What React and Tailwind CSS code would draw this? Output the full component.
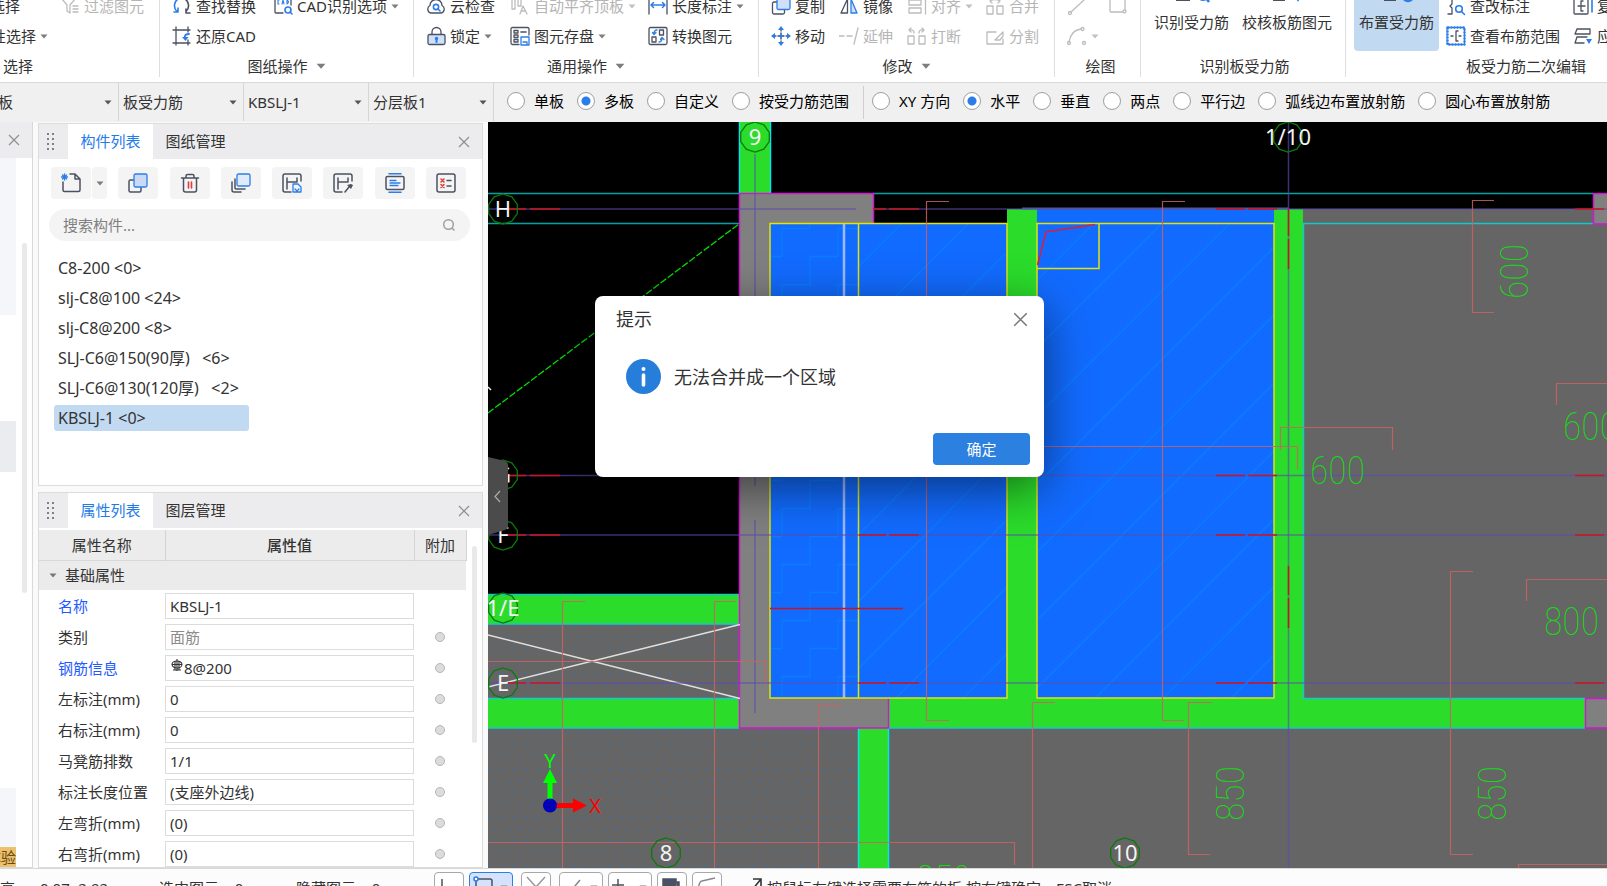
import React from "react";

/* ---------- icons ---------- */

const INK = "#4b5160";
const BLUE = "#2b7de9";
const MUTE = "#bcbcbc";

function Svg({ size = 20, children, className = "" }) {
  return (
    <svg
      width={size}
      height={size}
      viewBox="0 0 20 20"
      fill="none"
      strokeWidth="1.3"
      strokeLinecap="round"
      strokeLinejoin="round"
      aria-hidden="true"
      className={"shrink-0 " + className}
    >
      {children}
    </svg>
  );
}

const icons = {
  filter: (
    <Svg>
      <path d="M2 3h13L10 9v8l-3-2V9z" stroke={MUTE} />
      <path d="M13 10h5M13 13h5M13 16h5" stroke={MUTE} />
    </Svg>
  ),
  replace: (
    <Svg>
      <path d="M6 3A8 8 0 0 0 5 15.500M2 16h4v-4" stroke={BLUE} strokeWidth="1.6" />
      <path d="M13 3a8 8 0 0 1 1 12.500M18 17h-4v-4" stroke={INK} strokeWidth="1.6" />
    </Svg>
  ),
  cadOptions: (
    <Svg>
      <path d="M2 3v13q0 1 1 1h7M18 3v6" stroke={INK} />
      <path d="M6 4H5v4h1M9 8l1-4 1 4M14 4v4q3-2 0-4" stroke={BLUE} strokeWidth="1.1" />
      <circle cx="15" cy="14" r="3" stroke={BLUE} strokeWidth="1.6" />
      <path d="M17 16l2 2" stroke={BLUE} strokeWidth="1.6" />
    </Svg>
  ),
  restoreCad: (
    <Svg>
      <path d="M1 4h17M1 17h17M4 1v18M16 1v5M16 14v5" stroke={INK} />
      <path d="M17 8q-5 0-4 4" stroke={BLUE} strokeWidth="1.8" />
      <path d="M10 11l3.500 4 3-4z" fill={BLUE} />
    </Svg>
  ),
  cloud: (
    <Svg>
      <path d="M5 17a4 4 0 0 1-1-7.500A6 6 0 0 1 16 9.500 4 4 0 0 1 15 17z" stroke={INK} />
      <circle cx="10" cy="11" r="2.600" stroke={BLUE} strokeWidth="1.6" />
      <path d="M12 13l2 2" stroke={BLUE} strokeWidth="1.6" />
    </Svg>
  ),
  alignTop: (
    <Svg>
      <path d="M2 3v10h3V3M8 3v7h3V3M10 18l3-8 4 8M11.500 15h4" stroke={MUTE} />
    </Svg>
  ),
  dimension: (
    <Svg>
      <path d="M1 2v16M19 2v16" stroke={INK} />
      <path d="M3 9h14M5.500 6.500L3 9l2.500 2.500M14.500 6.500L17 9l-2.500 2.500" stroke={BLUE} strokeWidth="1.5" />
    </Svg>
  ),
  lock: (
    <Svg>
      <path d="M6 9V6a4.500 4.500 0 0 1 9 0v3" stroke={INK} />
      <rect x="2" y="8.500" width="17" height="10" rx="1.500" fill="#cfe0f8" stroke={INK} />
      <path d="M10.500 12v4" stroke={BLUE} strokeWidth="2" />
      <circle cx="10.500" cy="12.500" r="1.700" fill={BLUE} />
    </Svg>
  ),
  store: (
    <Svg>
      <path d="M19 9V3q0-1.500-1.500-1.500h-15Q1 1.500 1 3v14q0 1.500 1.500 1.500H9" stroke={INK} />
      <rect x="4" y="4.500" width="4" height="2.500" stroke={INK} />
      <rect x="4" y="9" width="4" height="2.500" stroke={INK} />
      <rect x="4" y="13.500" width="4" height="2.500" stroke={INK} />
      <path d="M11 6h5" stroke={INK} strokeWidth="1.6" />
      <path d="M11 11h8v8h-8zM13 16h4v3" stroke={BLUE} />
    </Svg>
  ),
  convert: (
    <Svg>
      <rect x="1" y="1.500" width="18" height="17" rx="1.500" stroke={INK} />
      <rect x="11.500" y="4" width="4" height="5" stroke={INK} />
      <rect x="4" y="11" width="4" height="5" stroke={INK} />
      <path d="M9 4q-3 0-3 4M4.500 6.500L6 8.500l2-2M11 16q3 0 3-4M12.500 13.500L14 11.500l2 2" stroke={BLUE} />
    </Svg>
  ),
  copy: (
    <Svg>
      <rect x="1.500" y="6" width="12" height="12" rx="1.500" stroke={INK} />
      <rect x="6" y="0.500" width="13" height="13" rx="1.500" fill="#cfe0f8" stroke={BLUE} />
    </Svg>
  ),
  mirror: (
    <Svg>
      <path d="M8.500 3v14H2z" stroke={INK} />
      <path d="M12 3v14h6z" fill="#cfe0f8" stroke={BLUE} />
    </Svg>
  ),
  align: (
    <Svg>
      <path d="M18.500 2v16M2 4h12v5H2zM2 12h12v5H2z" stroke={MUTE} />
    </Svg>
  ),
  merge: (
    <Svg>
      <path d="M2 10h6v8H2zM12 10h6v8h-6zM5 5q5-3 10 0M13 3l2 2-2 2M7 3L5 5l2 2" stroke={MUTE} />
    </Svg>
  ),
  move: (
    <Svg>
      <path d="M10 3v14M3 10h14" stroke={INK} strokeDasharray="2 2" />
      <path d="M10 0l3 4H7zM10 20l3-4H7zM0 10l4-3v6zM20 10l-4-3v6z" fill={BLUE} />
      <path d="M7.500 10h5M10 7.500v5" stroke={BLUE} />
    </Svg>
  ),
  extend: (
    <Svg>
      <path d="M0 10h5M8 10h5M19 2l-4 16" stroke={MUTE} />
    </Svg>
  ),
  breakApart: (
    <Svg>
      <path d="M1 10h6v8H1zM12 10h6v8h-6zM7 7q0-4-5-3M4 2L2 4l2 2M12 7q0-4 5-3M15 2l2 2-2 2" stroke={MUTE} />
    </Svg>
  ),
  split: (
    <Svg>
      <path d="M11 6H2v12h16v-5M10 14l8-8v4l-3 4z" stroke={MUTE} />
    </Svg>
  ),
  line: (
    <Svg>
      <path d="M4 16L17 4" stroke={MUTE} />
      <circle cx="3" cy="17" r="1.500" stroke={MUTE} />
    </Svg>
  ),
  rect: (
    <Svg>
      <rect x="2" y="3" width="15" height="13" rx="1" stroke={MUTE} />
      <circle cx="16.500" cy="15.500" r="1.500" fill="#fff" stroke={MUTE} />
    </Svg>
  ),
  arc: (
    <Svg>
      <path d="M2 16Q4 4 14 3" stroke={MUTE} />
      <circle cx="2" cy="17" r="1.500" stroke={MUTE} />
      <circle cx="15.500" cy="3" r="1.500" stroke={MUTE} />
      <circle cx="17" cy="17" r="1.500" stroke={MUTE} />
    </Svg>
  ),
  editMark: (
    <Svg>
      <path d="M2 2h4v6l-2 2 2 2v6H2" stroke={INK} />
      <circle cx="13" cy="13" r="3.300" stroke={BLUE} strokeWidth="1.600" />
      <path d="M15.500 15.500l3 3" stroke={BLUE} strokeWidth="1.600" />
    </Svg>
  ),
  viewRange: (
    <Svg>
      <rect x="1.500" y="1.500" width="17" height="17" stroke={BLUE} strokeWidth="1" />
      <rect x="1.500" y="1.500" width="17" height="17" stroke={BLUE} strokeWidth="2.400" strokeDasharray="2 1" strokeLinecap="butt" />
      <path d="M12 5h-2v10h2M5 10h2M13 10h2" stroke={INK} />
    </Svg>
  ),
  copyRebar: (
    <Svg>
      <rect x="1" y="2" width="14" height="16" rx="1" stroke={INK} />
      <path d="M10 5H8v10h2M5 10h7" stroke={INK} />
      <path d="M19 2v14" stroke={BLUE} strokeWidth="1.600" />
    </Svg>
  ),
  apply: (
    <Svg>
      <path d="M4 3h13v5H2zM4 3l-2 5M4 11h10M4 11l-2 6h9" stroke={INK} />
      <path d="M13 13h6l-3 5z" fill={BLUE} />
    </Svg>
  ),
  bigSearch: (
    <svg width="40" height="20" viewBox="0 0 40 20" fill="none" aria-hidden="true">
      <path d="M4 10h14v6H4z" fill={INK} />
      <circle cx="31" cy="10" r="5" stroke={BLUE} strokeWidth="2" />
      <path d="M34 13l3 4" stroke={BLUE} strokeWidth="2.500" />
    </svg>
  ),
  bigCheck: (
    <svg width="40" height="20" viewBox="0 0 40 20" fill="none" aria-hidden="true">
      <path d="M6 10h12v6H6z" fill={INK} />
      <path d="M26 9l5 6 5-9" stroke={BLUE} strokeWidth="2" />
    </svg>
  ),
  bigGear: (
    <svg width="40" height="20" viewBox="0 0 40 20" fill="none" aria-hidden="true">
      <path d="M7 10h12v6H7z" fill={INK} />
      <circle cx="31" cy="11" r="5" stroke={BLUE} strokeWidth="2.500" />
    </svg>
  ),
  newItem: (
    <Svg>
      <path d="M9 1h5l5 5v11q0 1.500-1.500 1.500h-14Q2 18.500 2 17V9M14 1v5h5" stroke={INK} strokeWidth="1.500" />
      <path d="M3.500 1v6M0.500 4h6M1.500 2l4 4M5.500 2l-4 4" stroke={BLUE} />
    </Svg>
  ),
  duplicate: (
    <Svg>
      <rect x="1" y="7" width="12" height="12" rx="1.500" stroke={INK} strokeWidth="1.500" />
      <rect x="6" y="1" width="13" height="13" rx="1.500" fill="#c8daf5" stroke={BLUE} />
    </Svg>
  ),
  trash: (
    <Svg>
      <path d="M1.500 5h17M6 5V3q0-1.500 1.500-1.500h5Q14 1.500 14 3v2M3.500 5v12q0 2 2 2h9q2 0 2-2V5" stroke={INK} strokeWidth="1.500" />
      <path d="M8.500 9v6M11.500 9v6" stroke="#e23b3b" strokeWidth="1.600" />
    </Svg>
  ),
  layers: (
    <Svg>
      <path d="M4 6v9q0 1 1 1h9M1 9v8q0 2 2 2h7" stroke={INK} strokeWidth="1.500" />
      <rect x="6" y="1" width="13" height="12" rx="1.500" fill="#dfeafb" stroke={BLUE} />
    </Svg>
  ),
  saveH: (
    <Svg>
      <path d="M19 8V3q0-2-2-2H3Q1 1 1 3v14q0 2 2 2h6M5 5v11M5 9h10M15 5v4" stroke={INK} strokeWidth="1.500" />
      <path d="M11 11h5l3 3v5h-8zM13 16l2 2 2-2" stroke={BLUE} />
    </Svg>
  ),
  pickH: (
    <Svg>
      <path d="M19 8V3q0-2-2-2H3Q1 1 1 3v14q0 2 2 2h6M5 5v11M5 9h10M15 5v4" stroke={INK} strokeWidth="1.500" />
      <path d="M12 19l4-5" stroke={INK} strokeWidth="1.500" />
      <path d="M14 12l4 4 2-4-2-1z" fill={INK} />
    </Svg>
  ),
  arrange: (
    <Svg>
      <path d="M4 0.800h12M4 19.200h12" stroke={BLUE} strokeWidth="1.600" />
      <rect x="1" y="3.500" width="18" height="13" rx="1.500" stroke={INK} strokeWidth="1.500" />
      <path d="M5 7.500h6M5 10h10M5 12.500h8" stroke={BLUE} />
    </Svg>
  ),
  checklist: (
    <Svg>
      <rect x="1" y="1" width="18" height="18" rx="2" stroke={INK} strokeWidth="1.500" />
      <path d="M5 6l3 3M8 6l-3 3M5 11.500l3 3M8 11.500l-3 3" stroke="#e23b3b" strokeWidth="1.600" />
      <path d="M11 7.500h4M11 13h4" stroke={INK} strokeWidth="1.500" />
    </Svg>
  ),
};

function Caret({ className = "w-2 text-[#7d7d7d]" }) {
  return (
    <svg viewBox="0 0 8 5" aria-hidden="true" className={"shrink-0 " + className}>
      <path d="M0.500 0.500h7L4 4.500z" fill="currentColor" />
    </svg>
  );
}

function Cross({ size = 12, className = "text-[#8f8f8f]" }) {
  return (
    <svg width={size} height={size} viewBox="0 0 12 12" aria-hidden="true" className={className}>
      <path d="M1 1l10 10M11 1L1 11" stroke="currentColor" strokeWidth="1.200" fill="none" />
    </svg>
  );
}

/* ---------- ribbon ---------- */

function Tool({ icon, text, disabled, menu, className = "" }) {
  return (
    <button
      type="button"
      disabled={disabled}
      aria-label={text || icon}
      className={"flex h-[30px] items-center gap-1 whitespace-nowrap disabled:text-[#b5b5b5] " + className}
    >
      {icon && icons[icon]}
      {text && <span>{text}</span>}
      {menu && <Caret className={disabled ? "w-2 text-[#c0c0c0]" : "w-2 text-[#7d7d7d]"} />}
    </button>
  );
}

function Group({ label, menu, className, children }) {
  return (
    <section className={"-mt-[9px] flex h-[86px] shrink-0 flex-col border-r border-[#dedede] " + className}>
      <div className="h-[60px] shrink-0">{children}</div>
      <div className="flex h-[30px] shrink-0 items-center justify-center gap-2">
        <span>{label}</span>
        {menu && <Caret className="w-[10px] text-[#7d7d7d]" />}
      </div>
    </section>
  );
}

function BigTool({ icon, text, active }) {
  return (
    <button
      type="button"
      className={
        "flex h-[60px] flex-col items-center rounded px-[5px] whitespace-nowrap " + (active ? "bg-[#c2d9f2]" : "")
      }
    >
      <span className="-mt-[6px] h-[27px]">{icons[icon]}</span>
      <span>{text}</span>
    </button>
  );
}

function Ribbon() {
  return (
    <header className="flex h-[83px] shrink-0 items-start overflow-hidden border-b border-[#d9d9d9] bg-white">
      <Group label="选择" className="w-[160px] [&>div:last-child]:justify-start [&>div:last-child]:pl-[3px]">
        <div className="-ml-[10px] flex gap-10">
          <Tool text="选择" />
          <Tool icon="filter" text="过滤图元" disabled />
        </div>
        <div className="-ml-6">
          <Tool text="属性选择" menu />
        </div>
      </Group>
      <Group label="图纸操作" menu className="w-[254px]">
        <div className="grid grid-cols-[101px_auto] pl-3">
          <Tool icon="replace" text="查找替换" />
          <Tool icon="cadOptions" text="CAD识别选项" menu />
          <Tool icon="restoreCad" text="还原CAD" />
        </div>
      </Group>
      <Group label="通用操作" menu className="w-[345px]">
        <div className="grid grid-cols-[84px_138px_auto] pl-3">
          <Tool icon="cloud" text="云检查" />
          <Tool icon="alignTop" text="自动平齐顶板" disabled menu />
          <Tool icon="dimension" text="长度标注" menu />
          <Tool icon="lock" text="锁定" menu />
          <Tool icon="store" text="图元存盘" menu />
          <Tool icon="convert" text="转换图元" />
        </div>
      </Group>
      <Group label="修改" menu className="w-[296px]">
        <div className="grid grid-cols-[68px_68px_78px_auto] pl-3">
          <Tool icon="copy" text="复制" />
          <Tool icon="mirror" text="镜像" />
          <Tool icon="align" text="对齐" disabled menu />
          <Tool icon="merge" text="合并" disabled />
          <Tool icon="move" text="移动" />
          <Tool icon="extend" text="延伸" disabled />
          <Tool icon="breakApart" text="打断" disabled />
          <Tool icon="split" text="分割" disabled />
        </div>
      </Group>
      <Group label="绘图" className="w-[86px] [&>div:last-child]:pl-[6px]">
        <div className="grid grid-cols-[41px_auto] pl-3">
          <Tool icon="line" disabled />
          <Tool icon="rect" disabled />
          <Tool icon="arc" disabled menu />
        </div>
      </Group>
      <Group label="识别板受力筋" className="w-[205px] [&>div:last-child]:pl-[3px]">
        <div className="flex gap-[3px] pl-2">
          <BigTool icon="bigSearch" text="识别受力筋" />
          <BigTool icon="bigCheck" text="校核板筋图元" />
        </div>
      </Group>
      <Group label="板受力筋二次编辑" className="w-[360px] [&>div:last-child]:justify-start [&>div:last-child]:pl-[120px]">
        <div className="flex pl-2">
          <BigTool icon="bigGear" text="布置受力筋" active />
          <div className="grid grid-cols-[127px_auto] pl-[7px]">
            <Tool icon="editMark" text="查改标注" />
            <Tool icon="copyRebar" text="复制钢筋" />
            <Tool icon="viewRange" text="查看布筋范围" />
            <Tool icon="apply" text="应用同名板" />
          </div>
        </div>
      </Group>
    </header>
  );
}

/* ---------- option bar ---------- */

function Picker({ label, value }) {
  return (
    <div className="relative flex w-[125px] shrink-0 items-center border-r border-[#d6d6d6]">
      <select
        aria-label={label}
        defaultValue={value}
        className="h-full w-full appearance-none bg-transparent pr-5 pl-1 outline-none"
      >
        <option>{value}</option>
      </select>
      <Caret className="pointer-events-none absolute right-[6px] w-2 text-[#555]" />
    </div>
  );
}

function Radio({ name, text, checked }) {
  return (
    <label className="flex items-center gap-[9px] whitespace-nowrap text-black">
      <input
        type="radio"
        name={name}
        defaultChecked={checked}
        className="size-[18px] shrink-0 appearance-none rounded-full border border-[#a0a0a0] bg-white bg-clip-padding checked:bg-[radial-gradient(circle,#2b7de9_0,#2b7de9_4px,#fff_5px)]"
      />
      {text}
    </label>
  );
}

function OptionBar() {
  return (
    <div className="flex h-[39px] shrink-0 overflow-hidden bg-[#f0f0f0]">
      <div className="-ml-[6px] flex shrink-0 pb-px">
        <Picker label="构件大类" value="板" />
        <Picker label="构件类型" value="板受力筋" />
        <Picker label="构件" value="KBSLJ-1" />
        <Picker label="分层" value="分层板1" />
      </div>
      <div className="flex items-center gap-[13px] pb-1 pl-[13px]">
        <Radio name="scope" text="单板" />
        <Radio name="scope" text="多板" checked />
        <Radio name="scope" text="自定义" />
        <Radio name="scope" text="按受力筋范围" />
      </div>
      <div className="my-[3px] ml-[14px] w-px bg-[#cfcfcf]" />
      <div className="flex items-center gap-[13px] pb-1 pl-2">
        <Radio name="dir" text="XY 方向" />
        <Radio name="dir" text="水平" checked />
        <Radio name="dir" text="垂直" />
        <Radio name="dir" text="两点" />
        <Radio name="dir" text="平行边" />
        <Radio name="dir" text="弧线边布置放射筋" />
        <Radio name="dir" text="圆心布置放射筋" />
      </div>
    </div>
  );
}

/* ---------- side panels ---------- */

function NavStrip() {
  return (
    <nav className="flex w-[33px] shrink-0 flex-col border-r border-b border-[#d9d9d9] bg-white">
      <div className="flex h-9 shrink-0 items-center justify-center bg-[#ececee] pr-1">
        <button type="button" aria-label="关闭导航">
          <Cross />
        </button>
      </div>
      <div className="flex min-h-0 grow justify-between pr-[5px]">
        <div className="flex w-4 flex-col overflow-hidden">
          <div className="h-[157px] shrink-0 bg-[#f5f6f9]" />
          <div className="mt-[106px] h-[51px] shrink-0 bg-[#ebecf0]" />
          <div className="grow" />
          <div className="h-[59px] shrink-0 bg-[#f5f6f9]" />
          <div className="flex h-5 shrink-0 justify-end bg-[#ecc06c] leading-5 whitespace-nowrap text-[#6b4a12]">
            体验
          </div>
        </div>
        <div className="mt-[85px] h-[350px] w-[5px] rounded bg-[#e9e9e9]" />
      </div>
    </nav>
  );
}

function PanelTabs({ active, other }) {
  return (
    <div className="flex h-[35px] shrink-0 items-stretch bg-[#ececee]">
      <svg width="29" height="35" viewBox="0 0 29 35" aria-hidden="true" fill="#808080">
        {[9, 14, 19, 24].map((y) => (
          <path key={y} d={`M8 ${y}h2v2h-2zM13 ${y}h2v2h-2z`} />
        ))}
      </svg>
      <button type="button" className="w-[85px] bg-white pb-[2px] text-[#1f7be8]">
        {active}
      </button>
      <button type="button" className="w-[85px] pb-[2px]">
        {other}
      </button>
      <button type="button" aria-label="关闭面板" className="ml-auto pr-3">
        <Cross />
      </button>
    </div>
  );
}

const components = [
  "C8-200 <0>",
  "slj-C8@100 <24>",
  "slj-C8@200 <8>",
  "SLJ-C6@150(90厚)   <6>",
  "SLJ-C6@130(120厚)   <2>",
  "KBSLJ-1 <0>",
];

function ActionButton({ icon, label }) {
  return (
    <button type="button" aria-label={label} className="flex h-8 w-10 items-center justify-center rounded bg-[#f4f4f4]">
      {icons[icon]}
    </button>
  );
}

function ComponentPanel() {
  return (
    <section className="flex h-[363px] shrink-0 flex-col border border-[#dcdcdc] bg-white">
      <PanelTabs active="构件列表" other="图纸管理" />
      <div className="mt-2 mr-4 ml-3 flex shrink-0 justify-between">
        <div className="flex gap-px">
          <ActionButton icon="newItem" label="新建" />
          <button type="button" aria-label="新建选项" className="flex h-8 w-[15px] items-center justify-center rounded bg-[#f4f4f4]">
            <Caret />
          </button>
        </div>
        <ActionButton icon="duplicate" label="复制" />
        <ActionButton icon="trash" label="删除" />
        <ActionButton icon="layers" label="层间复制" />
        <ActionButton icon="saveH" label="存档" />
        <ActionButton icon="pickH" label="提取" />
        <ActionButton icon="arrange" label="排列" />
        <ActionButton icon="checklist" label="校核" />
      </div>
      <div className="mt-[10px] mr-3 ml-[10px] flex h-8 shrink-0 items-center rounded-full bg-[#f4f4f4] pr-[14px] pl-[14px]">
        <input
          type="text"
          aria-label="搜索构件"
          placeholder="搜索构件..."
          className="min-w-0 grow bg-transparent outline-none placeholder:text-[#808080]"
        />
        <svg width="14" height="14" viewBox="0 0 14 14" fill="none" stroke="#a0a0a0" strokeWidth="1.500" aria-hidden="true">
          <circle cx="6.500" cy="6.500" r="4.800" />
          <path d="M10 10l2.500 2.500" />
        </svg>
      </div>
      <ul className="mt-3 pl-[15px] text-[16px]">
        {components.map((c, i) => (
          <li key={c} className="flex h-[30px] items-center">
            <button
              type="button"
              className={
                "h-[26px] w-[195px] rounded-[3px] pl-1 text-left leading-[26px] whitespace-pre " +
                (i === 5 ? "bg-[#c2d9f2]" : "")
              }
            >
              {c}
            </button>
          </li>
        ))}
      </ul>
    </section>
  );
}

const properties = [
  { id: "name", name: "名称", value: "KBSLJ-1", key: true, noExtra: true },
  { id: "kind", name: "类别", value: "面筋", dim: true },
  { id: "rebar", name: "钢筋信息", value: "8@200", key: true, rebar: true },
  { id: "left-mark", name: "左标注(mm)", value: "0" },
  { id: "right-mark", name: "右标注(mm)", value: "0" },
  { id: "rows", name: "马凳筋排数", value: "1/1" },
  { id: "mark-pos", name: "标注长度位置", value: "(支座外边线)" },
  { id: "left-bend", name: "左弯折(mm)", value: "(0)" },
  { id: "right-bend", name: "右弯折(mm)", value: "(0)" },
];

function PropertyPanel() {
  return (
    <section className="mt-[6px] flex min-h-0 grow flex-col overflow-hidden border border-[#dcdcdc] bg-white">
      <PanelTabs active="属性列表" other="图层管理" />
      <div className="mt-[2px] flex min-h-0 grow items-start">
        <table className="w-[427px] shrink-0 table-fixed border-collapse">
          <colgroup>
            <col className="w-[126px]" />
            <col className="w-[249px]" />
            <col className="w-[52px]" />
          </colgroup>
          <thead>
            <tr className="h-[30px] border-b border-[#d8d8d8] bg-[#ececec]">
              <th className="border-r border-[#d4d4d4] font-normal">属性名称</th>
              <th className="border-r border-[#d4d4d4] font-medium">属性值</th>
              <th className="border-r border-[#d4d4d4] font-normal">附加</th>
            </tr>
          </thead>
          <tbody>
            <tr className="h-[30px] bg-[#ebebeb]">
              <td colSpan={3} className="pl-[10px]">
                <button type="button" className="flex items-center gap-2">
                  <Caret className="w-2 text-[#777]" />
                  基础属性
                </button>
              </td>
            </tr>
            {properties.map((p) => (
              <tr key={p.id} className="h-[31px]">
                <th scope="row" className="p-0 pl-[19px] text-left font-normal whitespace-nowrap">
                  <label htmlFor={p.id} className={p.key ? "text-[#1f5bff]" : ""}>
                    {p.name}
                  </label>
                </th>
                <td className="p-0">
                  <div className="flex h-[26px] items-center border border-[#dcdcdc] pl-1">
                    {p.rebar && (
                      <svg width="14" height="14" viewBox="0 0 14 14" fill="none" stroke="#333" strokeWidth="1.100" aria-hidden="true" className="mb-1 shrink-0">
                        <ellipse cx="7" cy="5.500" rx="5" ry="3.500" />
                        <path d="M7 0v12M5 2v9M9 2v9M2 5.500h10M3 11h8" />
                      </svg>
                    )}
                    <input
                      id={p.id}
                      type="text"
                      defaultValue={p.value}
                      className={"w-full min-w-0 bg-transparent outline-none " + (p.dim ? "text-[#8c8c8c]" : "")}
                    />
                  </div>
                </td>
                <td className="p-0">
                  {!p.noExtra && (
                    <input
                      type="radio"
                      aria-label={p.name + "附加"}
                      className="mx-auto block size-[10px] appearance-none rounded-full border border-[#b5b5b5] bg-[#dcdcde]"
                    />
                  )}
                </td>
              </tr>
            ))}
          </tbody>
        </table>
        <div className="mt-4 ml-[5px] h-[197px] w-[5px] rounded bg-[#e9e9e9]" />
      </div>
    </section>
  );
}

/* ---------- drawing ---------- */

const GREEN = "#2bdc2b";
const CYAN = "#14c8c8";
const SLAB = "#656565";
const FILL = "#126bff";

const bubbles = [
  [755, 137, "9"],
  [1288, 137, "1/10"],
  [503, 209, "H"],
  [503, 475, "G"],
  [503, 535, "F"],
  [503, 608, "1/E"],
  [503, 683, "E"],
  [666, 853, "8"],
  [1125, 853, "10"],
];

const decagon = (cx, cy, r) =>
  Array.from({ length: 10 }, (_, i) => {
    const a = (Math.PI * 2 * i) / 10 - Math.PI / 2;
    return `${(cx + r * Math.cos(a)).toFixed(1)},${(cy + r * Math.sin(a)).toFixed(1)}`;
  }).join(" ");

const rebarLines = [
  "M949 201.500H926.500V720.500H949",
  "M1185 201.500H1162.500V720.500H1184",
  "M1494 200.500H1472.500V312.500H1494",
  "M1607 383.500H1556.500V405",
  "M1280.500 450V427.500H1392.500V450",
  "M770 446.500H1297.500V469",
  "M585 601.500H562.500V868",
  "M736 601.500H714.500V868",
  "M488 661.500H765.500V683",
  "M488 842.500H1014.500V865",
  "M842 704.500H818.500V868",
  "M1055 702.500H1032.500V868",
  "M1212 702.500H1188.500V854.500H1210",
  "M1473 571.500H1450.500V854.500H1473",
  "M1607 579.500H1526.500V601",
  "M1607 864.500H1518.500V868",
];

const redTicks = [209, 475.5, 535, 683].flatMap((y) => [
  `M508 ${y}h18M530 ${y}h30`,
  `M1216 ${y}h29M1248 ${y}h29`,
  `M1575 ${y}h29`,
]);

const dims = [
  [1310, 484, "600"],
  [1563, 440, "600"],
  [1544, 635, "800"],
  [916, 893, "850"],
];

const verticalDims = [
  [1528, 299, "600"],
  [1244, 821, "850"],
  [1506, 821, "850"],
];

function Drawing() {
  return (
    <svg viewBox="488 122 1119 746" preserveAspectRatio="xMinYMin slice" className="block size-full bg-black" role="img" aria-label="板配筋平面图">
      <defs>
        <pattern id="dots" x="495" y="732" width="24" height="24" patternUnits="userSpaceOnUse">
          <path d="M0 1h1.500M12 1h1.500M6 13h1.500M18 13h1.500" stroke="#2b74bd" strokeWidth="1.300" />
        </pattern>
        <clipPath id="roomA">
          <path d="M859 224h148v474H859z" />
        </clipPath>
        <clipPath id="roomStep">
          <path d="M771 224h88v474h-88z" />
        </clipPath>
        <clipPath id="roomB">
          <path d="M1038 224h236v474h-236z" />
        </clipPath>
      </defs>

      {/* slabs */}
      <path d="M1290 209h317v660h-317zM488 624h1119v244H488z" fill={SLAB} />
      <path d="M488 624h251v74H488zM488 728h370v140H488z" fill="url(#dots)" />

      {/* beams */}
      <g fill={GREEN}>
        <path d="M739 122h31v72h-31zM488 594h251v30H488zM488 698h251v30H488zM858 728h31v140h-31z" />
        <path d="M1007 209h30v519h-30zM1274 209h29v519h-29zM888 698h697v30H888z" />
      </g>
      <g stroke={CYAN} fill="none" strokeWidth="1.500">
        <path d="M488 594.500H739M488 624H739M488 698.500H739M488 728H739M888 728H1585" />
        <path d="M739.500 122V193M770.500 122V193M858.500 728V868M888.500 728V868" stroke="#00e8e8" />
        <path d="M1593 223.500H1303.500V698.500H1585" />
        <path d="M488 193.500H739M873 193.500H1593M488 223.500H739" stroke="#00a3a3" />
      </g>

      {/* columns */}
      <path d="M739.500 193.500H873.500V224H770V698H888.500V728H739.500z" fill="#808080" />
      <path d="M770 224H873.500V193.500H739.500V728H888.500V698" fill="none" stroke="#d414d4" strokeWidth="1.500" />
      <path d="M770 223H873" stroke="#808080" />
      <path d="M1610 193.500H1593.500V224H1610M1610 698.500H1585.500V728H1610" fill="#808080" stroke="#d414d4" strokeWidth="1.500" />

      {/* rooms */}
      <path d="M770 224h237v474H770zM1037 209h237v489h-237z" fill={FILL} />
      <g stroke="#0a7cff" strokeWidth="1.300" fill="none">
        <g clipPath="url(#roomA)">
          {Array.from({ length: 10 }, (_, k) => (
            <path key={k} d={`M${1125 + 67 * k - 200} 200L${1125 + 67 * k - 720} 720`} />
          ))}
        </g>
        <g clipPath="url(#roomB)">
          {Array.from({ length: 12 }, (_, k) => (
            <path key={k} d={`M${1317 + 68 * k - 200} 200L${1317 + 68 * k - 720} 720`} />
          ))}
        </g>
        <g clipPath="url(#roomStep)">
          {Array.from({ length: 11 }, (_, k) => (
            <path key={k} d={`M770 ${256.5 + 56 * k}h12v-28h28v-28h28v-28h22`} />
          ))}
        </g>
      </g>
      <path d="M844 224V698" stroke="#9bb9ff" strokeWidth="2.500" />
      <g stroke="#e3e30a" fill="none" strokeWidth="1.500">
        <path d="M770 223.500H1007V698H770zM858.500 224V698" />
        <path d="M1037 223.500H1274V698H1037zM1099 224V268.500H1037" />
      </g>
      <path d="M1037.500 265L1046 232L1095 224.500" stroke="#d8203c" strokeWidth="1.500" fill="none" />
      <path d="M1022 208.500H1288" stroke="#44609c" strokeWidth="2" />

      {/* opening */}
      <path d="M488 635L740 698.500M488 687L740 624.500" stroke="#e0e0e0" strokeWidth="1.500" />
      <path d="M488 413L739 224" stroke="#00e000" strokeWidth="1.300" strokeDasharray="7 2" />

      {/* axes */}
      <g stroke="#5f4bb0" strokeOpacity="0.650" strokeWidth="1.500" fill="none">
        <path d="M488 209H856M873 209H1607M488 475.500H1607M488 535H1607M488 683H1607" />
        <path d="M755 154V486M755 520V713M1288.500 122V868" />
      </g>
      <g stroke="#cc1420" strokeWidth="1.500" fill="none">
        {redTicks.map((d) => (
          <path key={d} d={d} />
        ))}
        <path d="M873 209h13M889 209h30M859 535h27M889 535h30M859 683h27M889 683h30M770 608.500H903" />
        <path d="M1288.500 209V236M1288.500 239V269M1288.500 566V595M1288.500 598V628" />
      </g>
      <g stroke="#cc6262" strokeOpacity="0.850" fill="none" strokeWidth="1.200">
        {rebarLines.map((d) => (
          <path key={d} d={d} />
        ))}
      </g>

      {/* axis bubbles */}
      <g className="[font-family:'Noto_Sans','Open_Sans',sans-serif] text-[22px]">
        {bubbles.map(([x, y, t]) => (
          <React.Fragment key={t}>
            <polygon points={decagon(x, y, 15)} fill="none" stroke="#0b7a0b" strokeWidth="1.300" />
            <text x={x} y={y + 8} textAnchor="middle" fill="#f4f4f4">
              {t}
            </text>
          </React.Fragment>
        ))}
      </g>
      <path d="M488 387l3 3" stroke="#eee" strokeWidth="1.500" />

      {/* dimension values */}
      <g
        fill="#14dc14"
        className="text-[38px] font-thin [font-family:'Noto_Sans_ExtraCondensed','Roboto_Condensed','Open_Sans_Condensed','Liberation_Sans_Narrow',Roboto,sans-serif]"
      >
        {dims.map(([x, y, t]) => (
          <text key={x} x={x} y={y}>
            {t}
          </text>
        ))}
        {verticalDims.map(([x, y, t]) => (
          <text key={x} transform={`translate(${x} ${y}) rotate(-90)`}>
            {t}
          </text>
        ))}
      </g>

      {/* coordinate marker */}
      <path d="M547.500 800V783H543L550 769L557 783H552.500V800z" fill="#00ff00" />
      <path d="M556 803H573V798.500L587 805.500L573 812.500V808H556z" fill="#ff0000" />
      <circle cx="550" cy="805.500" r="7" fill="#0000b8" />
      <g className="text-[20px] [font-family:'Noto_Sans',sans-serif]" textAnchor="middle">
        <text x="550" y="768" fill="#00ff00">
          Y
        </text>
        <text x="595" y="813" fill="#ff0000">
          X
        </text>
      </g>
    </svg>
  );
}

function MessageDialog() {
  return (
    <div
      role="alertdialog"
      aria-labelledby="dlg-title"
      aria-describedby="dlg-text"
      className="absolute top-[174px] left-[107px] flex h-[181px] w-[449px] flex-col rounded-lg bg-white pr-[14px] pl-[21px] text-[18px] shadow-[0_12px_48px_rgba(0,0,0,0.5)]"
    >
      <div className="flex h-[46px] items-center justify-between">
        <h2 id="dlg-title">提示</h2>
        <button type="button" aria-label="关闭" className="pr-[2px]">
          <Cross size={15} className="text-[#777]" />
        </button>
      </div>
      <div className="mt-[17px] flex items-center gap-[13px] pl-[10px]">
        <svg width="35" height="35" viewBox="0 0 35 35" aria-hidden="true">
          <circle cx="17.500" cy="17.500" r="17.500" fill="#277dda" />
          <circle cx="17.500" cy="10" r="2" fill="#fff" />
          <path d="M17.500 16v10" stroke="#fff" strokeWidth="3.600" strokeLinecap="round" />
        </svg>
        <p id="dlg-text">无法合并成一个区域</p>
      </div>
      <button type="button" className="mt-auto mb-3 h-8 w-[97px] self-end rounded bg-[#2c80e0] text-[15px] text-white">
        确定
      </button>
    </div>
  );
}

function Canvas() {
  return (
    <main className="relative min-w-0 grow overflow-hidden bg-black">
      <Drawing />
      <button type="button" aria-label="收起面板" className="absolute top-[335px] left-0">
        <svg width="20" height="78" viewBox="0 0 20 78" aria-hidden="true">
          <path d="M0 0L17 4Q20 5 20 8V70Q20 72 17 73L0 78z" fill="#4b4b4b" />
          <path d="M12 34L7 39.500L12 45" fill="none" stroke="#a8a8a8" strokeWidth="1.300" />
        </svg>
      </button>
      <MessageDialog />
    </main>
  );
}

/* ---------- status bar ---------- */

const statusTools = [
  { label: "正交", wide: false, d: "M7 6v14h14", tone: INK },
  { label: "捕捉", wide: true, active: true, d: "M6 6h14q2 0 2 2v12M6 6v14" },
  { label: "交点", wide: false, d: "M5 4l9 10L23 4M14 14v6", tone: "#999" },
  { label: "垂点", wide: true, d: "M7 16l3 3L20 7", tone: "#888" },
  { label: "中点", wide: true, d: "M9 6v12M3 12h12", tone: INK },
  { label: "顶点", wide: false, d: "M5 6h13v14H5zM18 9h3v10", solid: true, tone: INK },
  { label: "弧", wide: false, d: "M5 18q1-10 4-10L22 5", tone: "#888" },
];

function StatusBar() {
  return (
    <footer className="h-[18px] shrink-0 overflow-hidden border-t border-[#d8d8d8] bg-[#fcfcfc]">
      <div className="flex h-[38px] items-center whitespace-nowrap">
        <span className="w-10 shrink-0">高:</span>
        <span className="w-[119px] shrink-0">0.07~2.92</span>
        <span className="w-[137px] shrink-0">选中图元: &nbsp; 0</span>
        <span className="w-[138px] shrink-0">隐藏图元: &nbsp; 0</span>
        <div className="flex gap-[5px] self-start pt-[3px]">
          {statusTools.map((t, i) => (
            <button
              key={t.label}
              type="button"
              aria-label={t.label}
              className={
                "flex h-[30px] items-center justify-between rounded border pr-1 " +
                (t.wide ? "w-11 " : "w-[30px] ") +
                (i === 2 || i === 3 ? "ml-[3px] " : "") +
                (t.active ? "border-[#2b7de9] bg-[#d4e3fb]" : "border-[#a8a8a8] bg-white")
              }
            >
              <svg width="28" height="28" viewBox="0 0 28 28" className="shrink-0" aria-hidden="true">
                <path d={t.d} fill={t.solid ? INK : "none"} stroke={t.tone || INK} strokeWidth="1.500" />
                {t.active && <circle cx="6" cy="6" r="2" fill="#fff" stroke={BLUE} strokeWidth="1.500" />}
              </svg>
              {t.wide && <Caret />}
            </button>
          ))}
        </div>
        <svg width="14" height="20" viewBox="0 0 14 20" className="ml-[28px] shrink-0" aria-hidden="true">
          <path d="M3 1h8v10M11 1L2 12" fill="none" stroke="#333" strokeWidth="1.600" />
        </svg>
        <span className="ml-[3px]">按鼠标左键选择需要布筋的板,按右键确定、ESC取消</span>
      </div>
    </footer>
  );
}

export default function App() {
  return (
    <div className="flex h-screen flex-col overflow-hidden bg-[#fafafa] text-[15px] leading-5 text-[#333] [font-family:'Noto_Sans','Noto_Sans_CJK_SC',sans-serif]">
      <Ribbon />
      <OptionBar />
      <div className="flex min-h-0 grow">
        <NavStrip />
        <aside className="mr-[5px] ml-[5px] flex w-[445px] shrink-0 flex-col pt-px">
          <ComponentPanel />
          <PropertyPanel />
        </aside>
        <Canvas />
      </div>
      <StatusBar />
    </div>
  );
}
